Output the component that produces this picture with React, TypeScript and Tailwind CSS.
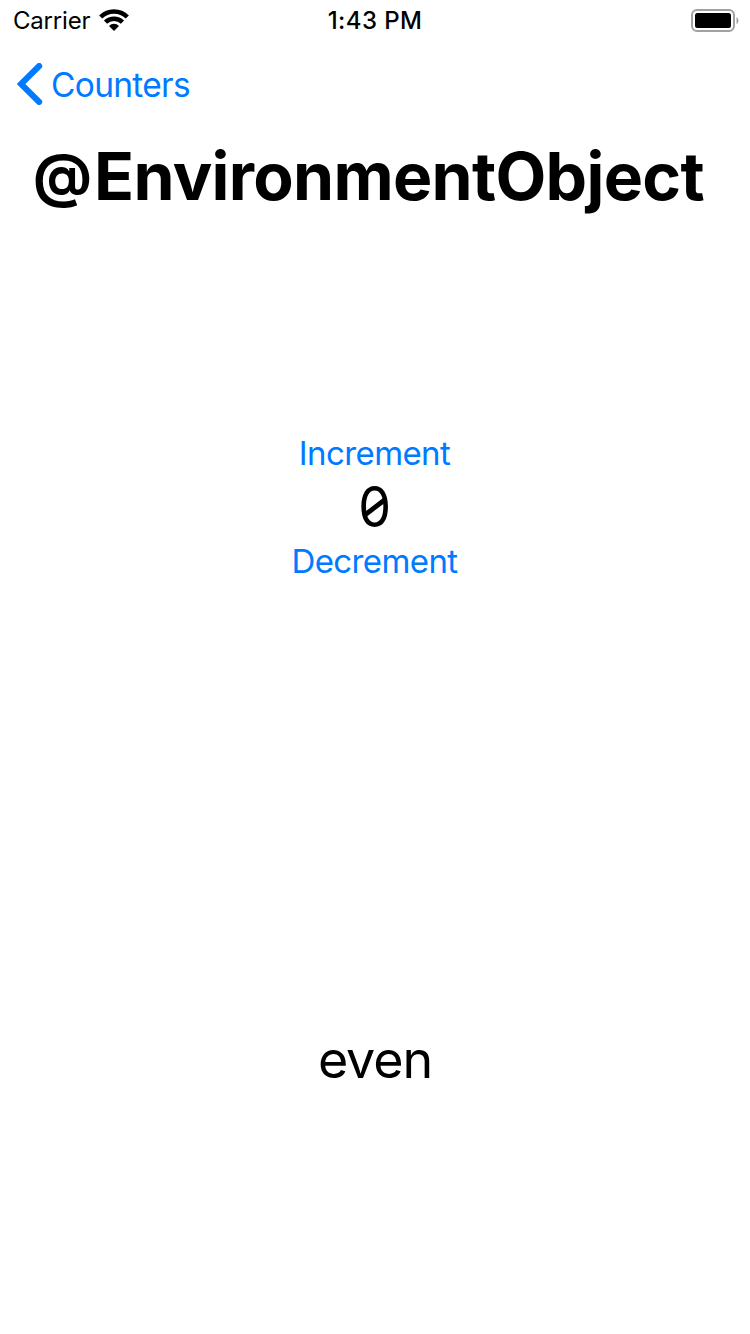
export default function App() {
  return (
    <div className="flex h-[1334px] w-[750px] flex-col bg-white font-['Inter','Liberation_Sans',sans-serif] text-black">
      <header className="grid h-10 grid-cols-3 items-center">
        <div className="flex items-center gap-[9px] pl-[13px]">
          <span className="pt-0.5 text-[24px] leading-none tracking-[-0.2px]">Carrier</span>
          <svg width="30" height="22" viewBox="0 0 30 22" fill="none" stroke="#000">
            <path d="M1.700 8a18.800 18.800 0 0 1 26.600 0M6.500 13.200a12 12 0 0 1 17 0" strokeWidth="4.500" />
            <path d="M15 22l-5-5.100a7 7 0 0 1 10 0z" fill="#000" stroke="none" />
          </svg>
        </div>
        <span className="pt-0.5 text-center text-[24px] font-medium leading-none tracking-[0.4px]">1:43 PM</span>
        <div className="flex justify-end pr-[11px]">
          <svg width="48" height="23" viewBox="0 0 48 23">
            <rect x="1" y="1" width="42" height="21" rx="5" fill="none" stroke="#a1a1a1" strokeWidth="2" />
            <rect x="4" y="4" width="36" height="15" rx="2.500" />
            <path d="M45.500 8q2 1 2 3.500t-2 3.500z" fill="#a1a1a1" />
          </svg>
        </div>
      </header>
      <nav className="flex h-[88px] items-center pl-[17px]">
        <button className="flex items-center gap-2 text-[#007aff]">
          <svg width="26" height="42" viewBox="0 0 26 42" fill="none" stroke="currentColor" strokeWidth="6" strokeLinecap="round">
            <path d="M22.200 3L4 21l18.200 18" />
          </svg>
          <span className="pt-[3px] text-[33.5px] leading-none tracking-[-0.7px]">Counters</span>
        </button>
      </nav>
      <h1 className="flex h-[104px] whitespace-nowrap pl-[33px] pt-[15px] text-[66px] font-bold leading-[66px] tracking-[-0.7px]">
        <span className="w-[61px] text-[58px] leading-[64px]">@</span>
        <span>EnvironmentObject</span>
      </h1>
      <main className="flex h-[550px] flex-col items-center pt-[200px]">
        <button className="pr-px text-[33px] leading-[42px] tracking-[-0.6px] text-[#007aff]">Increment</button>
        <div className="relative text-[56px] leading-[66px]">
          <span className="block scale-x-[0.93] pt-px leading-[65px]">0</span>
          <svg className="absolute left-1/2 top-1/2 -translate-x-1/2 -translate-y-1/2" width="24" height="24" viewBox="0 0 24 24">
            <path d="M2.500 19.500L21.500 5" stroke="#000" strokeWidth="4.800" />
          </svg>
        </div>
        <button className="pr-px text-[33px] leading-[42px] tracking-[-0.6px] text-[#007aff]">Decrement</button>
      </main>
      <p className="pt-[245px] text-center text-[52px] leading-[66px] tracking-[-1.1px]">even</p>
    </div>
  );
}
